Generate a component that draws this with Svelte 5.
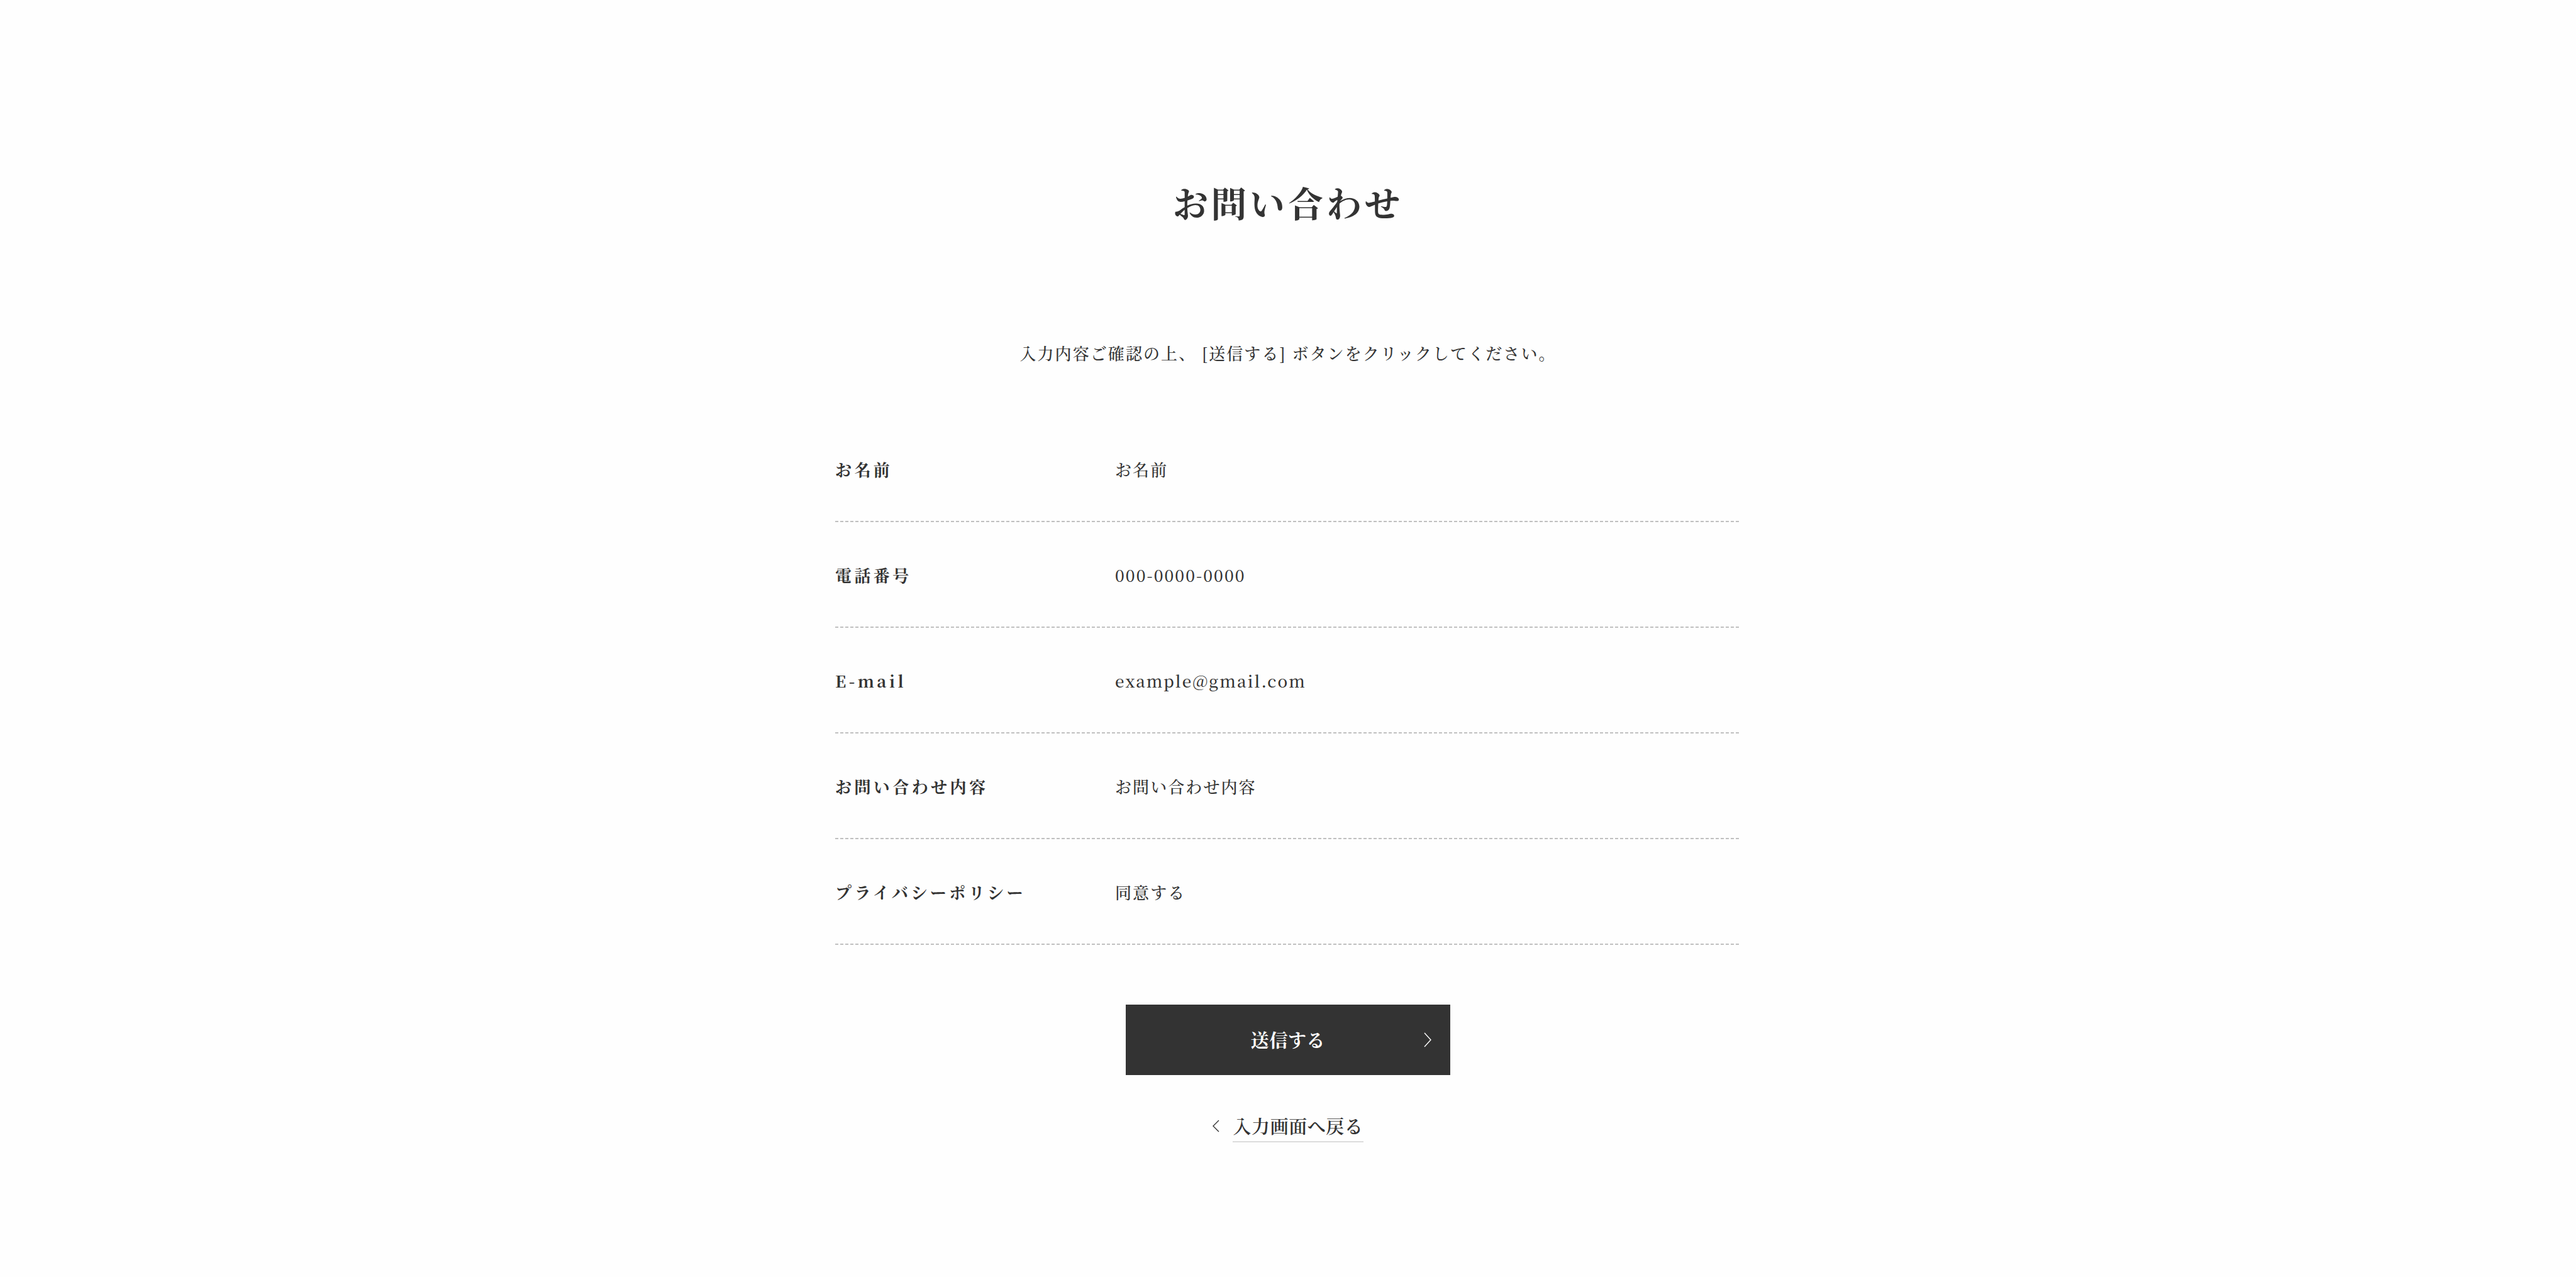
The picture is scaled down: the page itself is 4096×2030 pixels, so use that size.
<script>
  const rows = [
    { label: 'お名前', value: 'お名前' },
    { label: '電話番号', value: '000-0000-0000' },
    { label: 'E-mail', value: 'example@gmail.com' },
    { label: 'お問い合わせ内容', value: 'お問い合わせ内容' },
    { label: 'プライバシーポリシー', value: '同意する' }
  ];
</script>

<main class="page" lang="ja">
  <h1 class="title">お問い合わせ</h1>
  <p class="intro">入力内容ご確認の上、 [送信する] ボタンをクリックしてください。</p>

  <form class="confirm" onsubmit={(e) => e.preventDefault()}>
    <table class="summary">
      <tbody>
        {#each rows as row}
          <tr>
            <th scope="row">{row.label}</th>
            <td>{row.value}</td>
          </tr>
        {/each}
      </tbody>
    </table>

    <button class="submit" type="submit">
      <span class="submit-text">送信する</span>
      <svg class="next" viewBox="0 0 12 24" aria-hidden="true"><path d="M1 1 L11 12 L1 23" /></svg>
    </button>

    <a class="back" href="#input">
      <svg class="prev" viewBox="0 0 11 20" aria-hidden="true"><path d="M10 1 L1 10 L10 19" /></svg>
      <span class="back-text">入力画面へ戻る</span>
    </a>
  </form>
</main>

<style>
  :global(body) {
    margin: 0;
    background: #fefefe;
  }

  .page {
    box-sizing: border-box;
    min-height: 100vh;
    padding: 281px 40px 120px;
    display: flex;
    flex-direction: column;
    align-items: center;
    color: #333;
    font-family: 'Noto Serif CJK JP', 'Noto Serif JP', 'Liberation Serif', 'Noto Sans CJK JP', serif;
    font-size: 26px;
    font-weight: 500;
    line-height: 40px;
    letter-spacing: 0.08em;
  }

  .title {
    margin: 0;
    font-size: 56px;
    line-height: 80px;
    font-weight: 700;
    letter-spacing: 0.09em;
  }

  .intro {
    margin: 180px 0 81px;
    text-align: center;
  }

  .confirm {
    width: 100%;
    max-width: 1440px;
    display: flex;
    flex-direction: column;
    align-items: center;
  }

  .summary {
    width: 100%;
    table-layout: fixed;
    border-collapse: collapse;
  }

  .summary tr {
    height: 168px;
    background: repeating-linear-gradient(to right, #c0c0c0 0 5px, transparent 5px 8px) bottom / 100% 2px no-repeat;
  }

  .summary th,
  .summary td {
    padding: 0;
    text-align: left;
    vertical-align: middle;
  }

  .summary th {
    width: 445px;
    font-weight: 700;
    letter-spacing: 0.17em;
  }

  .submit {
    width: 516px;
    max-width: 100%;
    height: 112px;
    margin-top: 95px;
    padding: 0 30px;
    display: grid;
    grid-template-columns: 12px 1fr 12px;
    align-items: center;
    border: 0;
    background: #333;
    color: #fff;
    font: inherit;
    font-size: 29px;
    font-weight: 700;
    letter-spacing: 0.02em;
    cursor: pointer;
  }

  .submit-text {
    grid-column: 2;
  }

  svg {
    fill: none;
    stroke: currentColor;
    stroke-width: 1.4;
  }

  .next {
    width: 12px;
    height: 24px;
  }

  .back {
    margin-top: 61px;
    display: flex;
    gap: 21px;
    color: #333;
    font-size: 29px;
    font-weight: 600;
    letter-spacing: 0.02em;
    text-decoration: none;
  }

  .prev {
    width: 11px;
    height: 40px;
  }

  .back-text {
    padding-bottom: 4px;
    border-bottom: 2px solid #dcdcdc;
  }
</style>
